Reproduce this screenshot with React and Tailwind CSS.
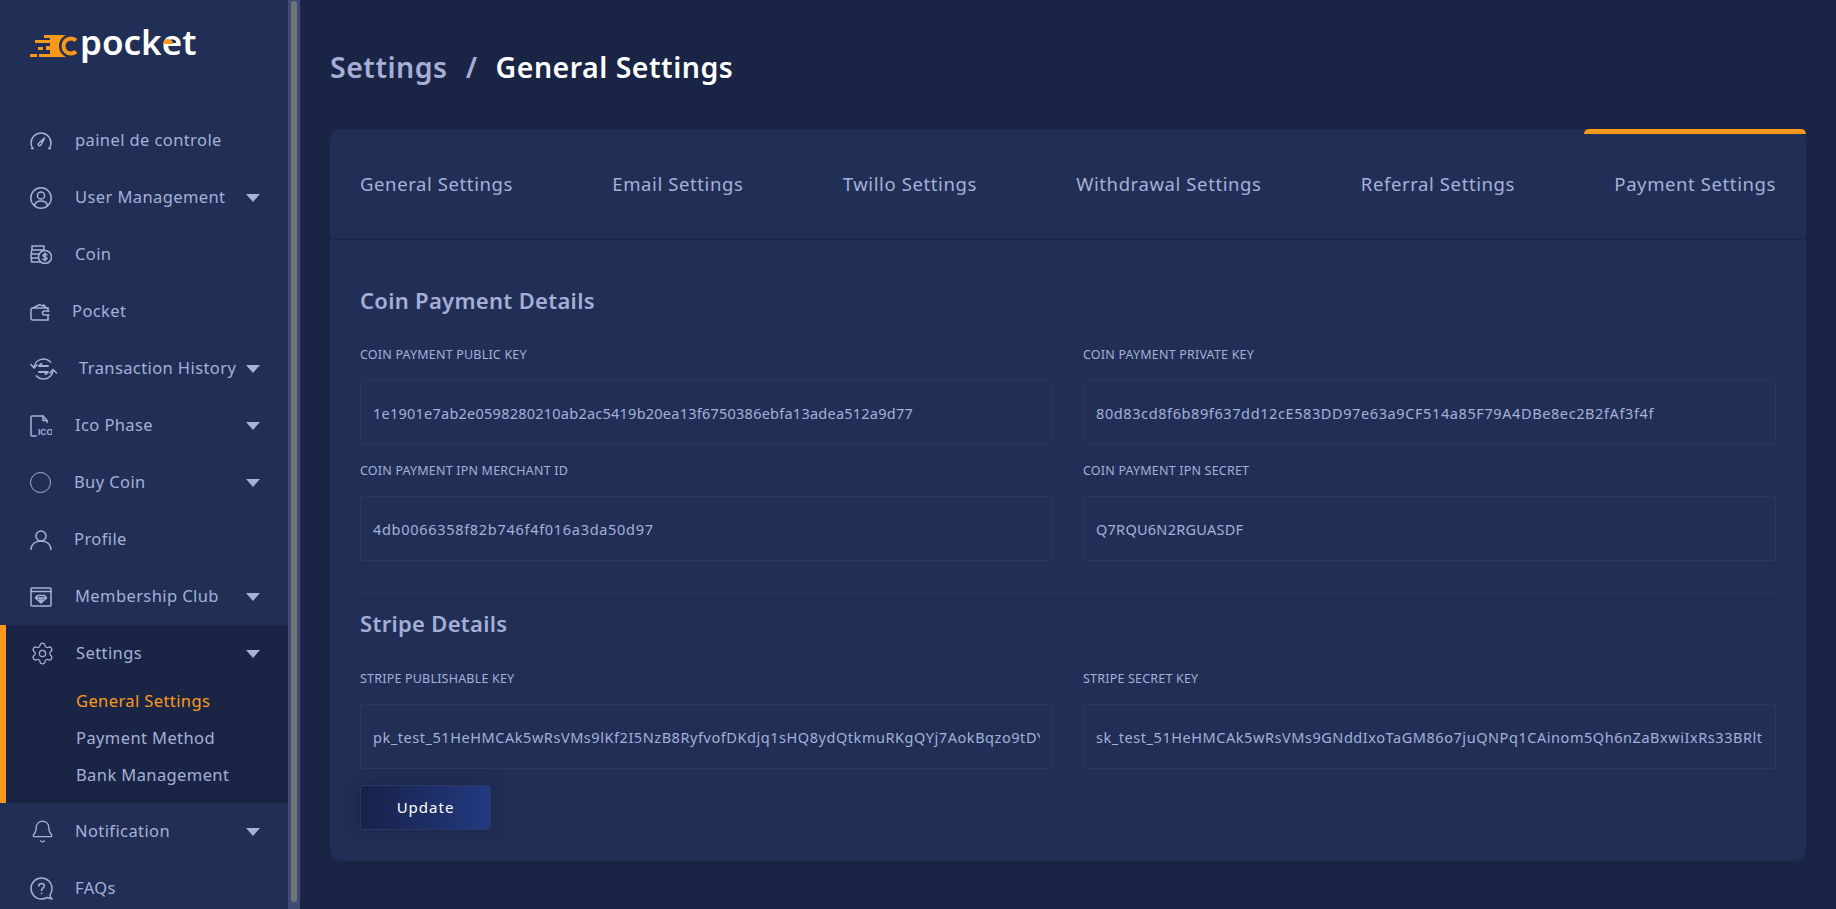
import { Settings, Bell } from "lucide-react";

const stroke = { fill: "none", stroke: "currentColor", strokeWidth: 1.5, strokeLinecap: "round", strokeLinejoin: "round" };

function GaugeIcon() {
  return (
    <svg width="22" height="18" viewBox="0 0 22 18" {...stroke}>
      <path d="M3 16.500C1.600 14.900 1 13 1 11 1 5.500 5.500 1 11 1s10 4.500 10 10c0 2-.7 3.900-2 5.500" />
      <path d="M8.500 13.500c-.8-1 .1-2.300 1-3l5-4.500-3 6.200c-.6 1.100-2.100 2-3 1.300z" />
      <path d="M1.500 16.500h1.500M19 16.500h1.500" />
    </svg>
  );
}

function UserCircleIcon() {
  return (
    <svg width="22" height="22" viewBox="0 0 22 22" {...stroke}>
      <circle cx="11" cy="11" r="10.200" />
      <circle cx="11" cy="8.500" r="3.600" />
      <path d="M4.500 18.500c.6-3 3-4.500 6.500-4.500s5.900 1.500 6.500 4.500" />
    </svg>
  );
}

function CoinIcon() {
  return (
    <svg width="22" height="19" viewBox="0 0 22 19" {...stroke}>
      <path d="M2 1h12v4H2zM2 5h-.5v4H9M2 9H1v4h7M2 13h-.5v4H10" />
      <circle cx="15" cy="12" r="6.500" />
      <path d="M17 9.800c-.5-.8-3.800-1-4 .7-.2 2 4.200 1 4 3-.2 1.600-3.500 1.500-4.200.5M15 8v8" />
    </svg>
  );
}

function WalletIcon() {
  return (
    <svg width="20" height="18" viewBox="0 0 20 18" {...stroke}>
      <path d="M18 5H2.500C1.500 5 1 5.600 1 6.500V15c0 1.200.7 2 2 2h15" />
      <path d="M3 5l7-3.500L12 3l2-1 2 3M19 8H14.500a2 2 0 0 0 0 4H19" />
      <path d="M18 5v3M18 12v5" />
    </svg>
  );
}

function TransactionIcon() {
  return (
    <svg width="27" height="22" viewBox="0 0 27 22" {...stroke}>
      <path d="M4 9C5 4.500 8.500 1 13.500 1c3 0 5.500 1.300 7.200 3.300M23 13c-1 4.500-4.500 8-9.500 8-3 0-5.500-1.300-7.200-3.300" />
      <path d="M1 6.500L4 10l3-3M20 15l3-3.500L26.500 15" />
      <path d="M18 8h-9l2.500-2.200M9 14h9l-2.500 2.200" strokeWidth="1.800" />
    </svg>
  );
}

function IcoIcon() {
  return (
    <svg width="22" height="22" viewBox="0 0 22 22" {...stroke}>
      <path d="M6 21H2c-.6 0-1-.4-1-1V2c0-.6.4-1 1-1h11l4 4.500v2" />
      <path d="M13 1v4.500h4" />
      <text x="8" y="20" fontFamily="'Liberation Sans', sans-serif" fontSize="8.500" fontWeight="700" fill="currentColor" stroke="none">ICO</text>
    </svg>
  );
}

function ProfileIcon() {
  return (
    <svg width="22" height="20" viewBox="0 0 22 20" {...stroke}>
      <circle cx="11" cy="6" r="5" />
      <path d="M1 19.500c.3-5 4-8.500 10-8.500s9.700 3.500 10 8.500" />
    </svg>
  );
}

function MemberIcon() {
  return (
    <svg width="22" height="20" viewBox="0 0 22 20" {...stroke}>
      <rect x="1" y="1" width="20" height="18" rx="1" />
      <path d="M1 4.500h20" />
      <path d="M7.500 8.500h7l2 2.500-5.500 5-5.500-5zM5.500 11h11M9.500 11L11 16l1.500-5" />
    </svg>
  );
}

function FaqIcon() {
  return (
    <svg width="23" height="23" viewBox="0 0 23 23" {...stroke}>
      <path d="M20 18c1.300-1.800 2-4 2-6.500C22 5.700 17.300 1 11.500 1S1 5.700 1 11.500 5.700 22 11.500 22c2 0 4-.6 5.500-1.500l5 1.500c-1.200-1-2-2.500-2-4z" />
      <path d="M8.800 9c.2-3.400 5.400-3.400 5.400 0 0 2.200-2.700 2.200-2.700 4.500M11.500 16.200v.3" />
    </svg>
  );
}

function Logo() {
  return (
    <div className="flex items-center h-[112px] pl-[30px] pb-[29px]">
      <svg width="48" height="23" viewBox="0 0 48 23" className="mt-[10px] shrink-0">
        <g fill="#fa981c">
          <rect x="14" y="0" width="20" height="3" />
          <rect x="5" y="5" width="26" height="3" />
          <rect x="8" y="12" width="5" height="3" />
          <rect x="16" y="11" width="16" height="4" />
          <rect x="0" y="19" width="7" height="3" />
          <rect x="9" y="19" width="30" height="3" />
          <rect x="20" y="0" width="18" height="22" />
        </g>
        <circle cx="41" cy="11" r="12" fill="#212e56" />
        <path d="M46 5.500C44.500 4 42.800 3.500 41 3.500c-4.400 0-7.500 3.300-7.500 7.500s3.100 7.500 7.500 7.500c1.800 0 3.500-.5 5-2" fill="none" stroke="#fa981c" strokeWidth="4" />
      </svg>
      <span className="relative ml-[2px] text-white text-[35px] leading-none font-semibold font-['Noto_Sans']">
        pocket
        <span className="absolute left-[83px] top-[15px] w-[10px] h-[5px] bg-[#fa981c] rounded-t-full" />
      </span>
    </div>
  );
}

function Caret() {
  return <span className="ml-auto mr-[28px] w-0 h-0 border-x-[7px] border-x-transparent border-t-[8px] border-t-[#aab1d8]" />;
}

function NavItem({ icon, label, caret, textClass }) {
  return (
    <div className="flex items-center h-[57px] pl-[30px] text-[#a5b1d8]">
      <span className="w-[45px] shrink-0 flex items-center">{icon}</span>
      <span className={`text-[16.500px] tracking-[0.4px] whitespace-nowrap ${textClass || ""}`}>{label}</span>
      {caret && <Caret />}
    </div>
  );
}

function Sidebar() {
  return (
    <div className="w-[288px] h-screen shrink-0 overflow-hidden bg-[#212e56]">
      <Logo />
      <NavItem icon={<GaugeIcon />} label="painel de controle" />
      <NavItem icon={<UserCircleIcon />} label="User Management" caret />
      <NavItem icon={<CoinIcon />} label="Coin" />
      <NavItem icon={<WalletIcon />} label="Pocket" textClass="-ml-[3px]" />
      <NavItem icon={<TransactionIcon />} label="Transaction History" caret textClass="ml-[4px]" />
      <NavItem icon={<IcoIcon />} label="Ico Phase" caret />
      <NavItem icon={<span className="w-[21px] h-[21px] rounded-full border-[1.5px] border-[#a5b1d8]" />} label="Buy Coin" caret textClass="-ml-[1px]" />
      <NavItem icon={<ProfileIcon />} label="Profile" textClass="-ml-[1px]" />
      <NavItem icon={<MemberIcon />} label="Membership Club" caret />
      <div className="bg-[#1a2445] border-l-[6px] border-[#fa981c] h-[178px]">
        <div className="-ml-[6px]">
          <NavItem icon={<Settings size={25} strokeWidth={1.200} />} label="Settings" caret textClass="ml-[1px]" />
        </div>
        <div className="pl-[70px] text-[16.500px] tracking-[0.4px] text-[#a5b1d8]">
          <div className="h-[37px] leading-[37px] text-[#fa981c]">General Settings</div>
          <div className="h-[37px] leading-[37px]">Payment Method</div>
          <div className="h-[37px] leading-[37px]">Bank Management</div>
        </div>
      </div>
      <NavItem icon={<Bell size={25} strokeWidth={1.200} />} label="Notification" caret />
      <NavItem icon={<FaqIcon />} label="FAQs" />
    </div>
  );
}

function Scrollbar() {
  return (
    <div className="w-[12px] h-screen shrink-0 bg-[#404c75] px-[3px] pt-[1px] pb-[7px]">
      <div className="h-full rounded-full bg-[#6f7479]" />
    </div>
  );
}

function Tab({ label, active }) {
  return (
    <div className="relative h-[110px] px-[30px] flex items-center text-[18.500px] tracking-[0.6px] text-[#a5b1d8] whitespace-nowrap">
      {active && <span className="absolute top-0 inset-x-0 h-[5px] rounded-t-[5px] bg-[#fa981c]" />}
      {label}
    </div>
  );
}

function Field({ label, value, spacing }) {
  return (
    <div className="mb-[16px]">
      <div className="h-5 leading-5 mb-[15px] text-[12.500px] uppercase text-[#a5b1d8] tracking-[0.2px]">{label}</div>
      <input
        readOnly
        value={value}
        className={`w-full h-[65px] px-[12px] rounded-[3px] border border-[#2b3862] bg-transparent text-[14.500px] text-[#a5b1d8] outline-none ${spacing}`}
      />
    </div>
  );
}

export default function App() {
  return (
    <div className="flex h-screen overflow-hidden bg-[#1a2445] font-['Noto_Sans',sans-serif]">
      <Sidebar />
      <Scrollbar />

      <div className="flex-1 px-[30px]">
        <div className="h-[129px] pt-[5px] flex items-center text-[28.500px] font-semibold tracking-[0.5px]">
          <span className="text-[#a5aed6]">Settings</span>
          <span className="text-[#a5aed6] mx-[18px]">/</span>
          <span className="text-white">General Settings</span>
        </div>

        <div className="bg-[#212e56] rounded-[12px]">
          <div className="flex justify-between border-b border-[#1b2544]">
            <Tab label="General Settings" />
            <Tab label="Email Settings" />
            <Tab label="Twillo Settings" />
            <Tab label="Withdrawal Settings" />
            <Tab label="Referral Settings" />
            <Tab label="Payment Settings" active />
          </div>

          <div className="px-[30px] pt-[45px] pb-[31px]">
            <h2 className="h-[30px] leading-[30px] mb-[30px] text-[22px] font-semibold text-[#a5aed6] tracking-[0.3px]">Coin Payment Details</h2>
            <div className="grid grid-cols-2 gap-x-[30px]">
              <Field label="Coin Payment Public Key" spacing="tracking-[0.24px]" value="1e1901e7ab2e0598280210ab2ac5419b20ea13f6750386ebfa13adea512a9d77" />
              <Field label="Coin Payment Private Key" spacing="tracking-[0.6px]" value="80d83cd8f6b89f637dd12cE583DD97e63a9CF514a85F79A4DBe8ec2B2fAf3f4f" />
              <Field label="Coin Payment IPN Merchant ID" spacing="tracking-[0.7px]" value="4db0066358f82b746f4f016a3da50d97" />
              <Field label="Coin Payment IPN Secret" spacing="tracking-[0.25px]" value="Q7RQU6N2RGUASDF" />
            </div>
            <div className="mt-[16px] mb-[14px] border-t border-[#29365f]" />
            <h2 className="h-[30px] leading-[30px] mb-[31px] text-[22px] font-semibold text-[#a5aed6] tracking-[0.3px]">Stripe Details</h2>
            <div className="grid grid-cols-2 gap-x-[30px]">
              <Field label="Stripe Publishable Key" spacing="tracking-[0.55px]" value="pk_test_51HeHMCAk5wRsVMs9lKf2I5NzB8RyfvofDKdjq1sHQ8ydQtkmuRKgQYj7AokBqzo9tDYw2mLe00abcd" />
              <Field label="Stripe Secret Key" spacing="tracking-[0.55px]" value="sk_test_51HeHMCAk5wRsVMs9GNddIxoTaGM86o7juQNPq1CAinom5Qh6nZaBxwiIxRs33BRlt" />
            </div>
            <button className="w-[131px] h-[45px] rounded-[4px] border border-[#2b3862] bg-gradient-to-r from-[#17224a] to-[#233a80] text-white text-[15px] tracking-[1px] shadow-[0_0_14px_rgba(20,28,60,0.5)]">
              Update
            </button>
          </div>
        </div>
      </div>
    </div>
  );
}
